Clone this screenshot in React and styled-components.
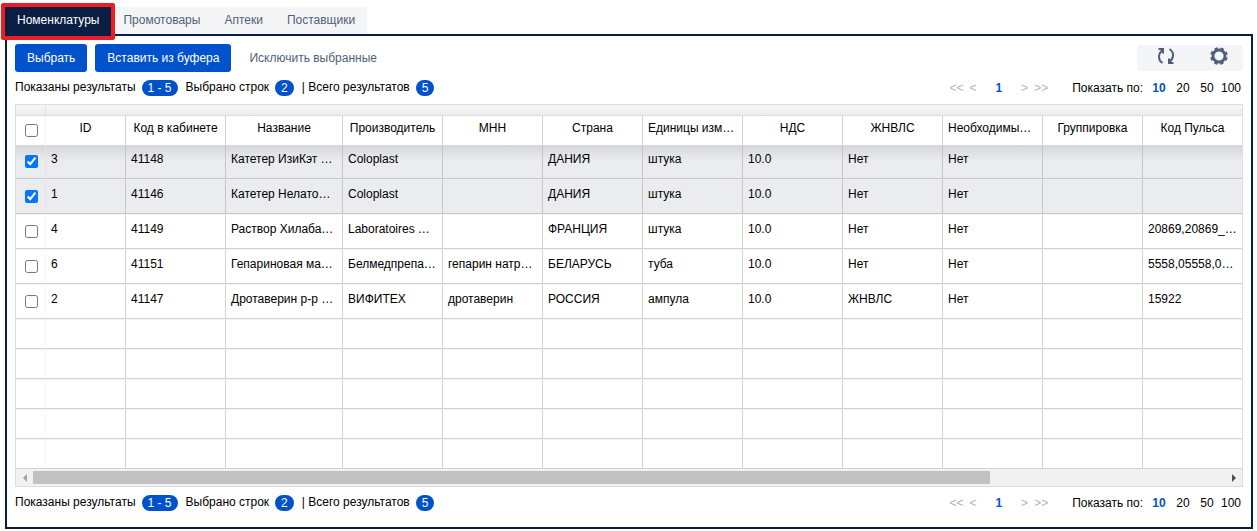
import React from 'react';
import styled, { createGlobalStyle } from 'styled-components';

const GlobalStyle = createGlobalStyle`
  *, *::before, *::after { box-sizing: border-box; }
  body {
    margin: 0;
    background: #fff;
    color: #000;
    font-family: Arial, "Liberation Sans", sans-serif;
    font-size: 12px;
    line-height: 16px;
  }
  button, input { font: inherit; }
`;

const Page = styled.main`
  padding: 7px 4px 2px 5px;
`;

const TabBar = styled.nav`
  display: flex;
  width: fit-content;
  height: 27px;
  background: #f4f5f7;
`;

const Tab = styled.button`
  position: relative;
  padding: 0 12px 2px;
  border: 0;
  background: ${(p) => (p.$active ? '#091e42' : 'transparent')};
  color: ${(p) => (p.$active ? '#fff' : '#505f79')};
  cursor: pointer;
`;

const Highlight = styled.span`
  position: absolute;
  inset: -4px -4px -6px;
  border: 4px solid #ee1c25;
  border-radius: 2px;
  pointer-events: none;
`;

const Panel = styled.section`
  padding: 8px;
  border: 2px solid #091e42;
`;

const Toolbar = styled.div`
  display: flex;
  align-items: center;
  gap: 8px;
`;

const Button = styled.button`
  height: 28px;
  padding: ${(p) => (p.$plain ? '0 10px' : '0 12px')};
  border: 0;
  border-radius: 3px;
  background: ${(p) => (p.$plain ? 'transparent' : '#0052cc')};
  color: ${(p) => (p.$plain ? '#505f79' : '#fff')};
  cursor: pointer;
`;

const IconBar = styled.div`
  display: flex;
  margin-left: auto;
  border-radius: 3px;
  background: #f4f5f7;
`;

const IconButton = styled.button`
  display: grid;
  place-items: center;
  width: 53px;
  height: 26px;
  padding: 0 0 4px 5px;
  border: 0;
  background: transparent;
  color: #505f79;
  cursor: pointer;
`;

const StatusRow = styled.div`
  display: flex;
  justify-content: space-between;
  align-items: center;
  height: 32px;
`;

const Summary = styled.div`
  display: flex;
  align-items: center;
  gap: 6px;
  padding-bottom: 2px;
`;

const Badge = styled.span`
  margin: 2px 2px 0 0;
  padding: 0 6px;
  border-radius: 8px;
  background: #0052cc;
  color: #fff;
`;

const Pager = styled.div`
  display: flex;
  align-items: center;
`;

const PageLink = styled.button`
  padding: 0 3px;
  border: 0;
  background: transparent;
  color: ${(p) => (p.$current ? '#0052cc' : '#b3b3b3')};
  font-weight: ${(p) => (p.$current ? 'bold' : 'normal')};
  margin: ${(p) => (p.$current ? '0 13px' : '0')};
`;

const Sizes = styled.div`
  display: flex;
  margin-left: 21px;
`;

const SizeLabel = styled.span`
  margin-right: 4px;
`;

const SizeButton = styled.button`
  width: 24px;
  padding: 0;
  border: 0;
  background: transparent;
  text-align: center;
  color: ${(p) => (p.$current ? '#0052cc' : '#000')};
  font-weight: ${(p) => (p.$current ? 'bold' : 'normal')};
`;

const Grid = styled.div`
  overflow: hidden;
  border: 1px solid #ddd;
`;

const Band = styled.div`
  height: 11px;
  border-bottom: 1px solid #ddd;
  background: linear-gradient(#f7f7f7, #ececec);
  &::before {
    content: '';
    display: block;
    width: 30px;
    height: 10px;
    border-right: 1px solid #e2e2e2;
  }
`;

const Table = styled.table`
  width: 100%;
  min-width: 1226px;
  table-layout: fixed;
  border-collapse: separate;
  border-spacing: 0;
`;

const Col = styled.col`
  width: ${(p) => (p.$w ? p.$w + 'px' : 'auto')};
`;

const HeadCell = styled.th`
  height: 29px;
  padding: 4px 5px 0;
  border-right: 1px solid #d3d3d3;
  font-weight: normal;
  vertical-align: top;
  overflow: hidden;
  white-space: nowrap;
  text-overflow: ellipsis;
  &:first-child { border-color: #f5f5f5; }
  &:last-child { border-right: 0; }
`;

const Row = styled.tr`
  height: ${(p) => (p.$empty ? 30 : 35)}px;
  background: ${(p) => (p.$selected ? '#ebecf0' : '#fff')};
  --line: ${(p) => (p.$selected ? '#c6c6c8' : '#d3d3d3')};
  --faint: ${(p) => (p.$selected ? '#e4e5e9' : '#f5f5f5')};
`;

const Body = styled.tbody`
  ${Row}:first-child { height: 34px; }
  ${Row}:first-child td {
    border-top: 0;
    background: linear-gradient(#d5d6da, #ebecf0 16px);
  }
`;

const Cell = styled.td`
  padding: 6px 5px 0;
  border-top: 1px solid #f2f2f2;
  border-right: 1px solid var(--line);
  border-bottom: 1px solid var(--line);
  vertical-align: top;
  overflow: hidden;
  white-space: nowrap;
  text-overflow: ellipsis;
  &:first-child { border-right-color: var(--faint); }
  &:last-child { border-right: 0; }
`;

const Check = styled.input`
  display: block;
  width: 13px;
  height: 13px;
  margin: 4px 0 0 4px;
`;

const ScrollBar = styled.div`
  display: flex;
  align-items: center;
  height: 17px;
  background: #f1f1f1;
`;

const ScrollArrow = styled.button`
  display: grid;
  place-items: center;
  width: 17px;
  height: 17px;
  padding: 0;
  border: 0;
  background: transparent;
  color: ${(p) => (p.$off ? '#a3a3a3' : '#505050')};
`;

const Track = styled.div`
  flex: 1;
`;

const Thumb = styled.div`
  width: 80.3%;
  height: 13px;
  background: #c1c1c1;
`;

const WIDTHS = [30, 80, 100, 117, 100, 100, 100, 100, 100, 100, 100, 100, 0];
const HEADERS = ['ID', 'Код в кабинете', 'Название', 'Производитель', 'МНН', 'Страна', 'Единицы измерения', 'НДС', 'ЖНВЛС', 'Необходимый запас', 'Группировка', 'Код Пульса'];
const ROWS = [
  { on: true, cells: ['3', '41148', 'Катетер ИзиКэт женский', 'Coloplast', '', 'ДАНИЯ', 'штука', '10.0', 'Нет', 'Нет', '', ''] },
  { on: true, cells: ['1', '41146', 'Катетер Нелатона мужской', 'Coloplast', '', 'ДАНИЯ', 'штука', '10.0', 'Нет', 'Нет', '', ''] },
  { on: false, cells: ['4', '41149', 'Раствор Хилабак для глаз', 'Laboratoires Thea', '', 'ФРАНЦИЯ', 'штука', '10.0', 'Нет', 'Нет', '', '20869,20869_1,20870'] },
  { on: false, cells: ['6', '41151', 'Гепариновая мазь 25 г', 'Белмедпрепараты', 'гепарин натрия, бензокаин', 'БЕЛАРУСЬ', 'туба', '10.0', 'Нет', 'Нет', '', '5558,05558,05559'] },
  { on: false, cells: ['2', '41147', 'Дротаверин р-р для инъекций', 'ВИФИТЕХ', 'дротаверин', 'РОССИЯ', 'ампула', '10.0', 'ЖНВЛС', 'Нет', '', '15922'] },
];

const Status = () => (
  <StatusRow>
    <Summary>
      Показаны результаты <Badge>1 - 5</Badge>
      Выбрано строк <Badge>2</Badge>
      | Всего результатов <Badge>5</Badge>
    </Summary>
    <Pager>
      <PageLink>&lt;&lt;</PageLink>
      <PageLink>&lt;</PageLink>
      <PageLink $current>1</PageLink>
      <PageLink>&gt;</PageLink>
      <PageLink>&gt;&gt;</PageLink>
      <Sizes>
        <SizeLabel>Показать по:</SizeLabel>
        {[10, 20, 50, 100].map((n) => (
          <SizeButton key={n} $current={n === 10}>{n}</SizeButton>
        ))}
      </Sizes>
    </Pager>
  </StatusRow>
);

const RefreshIcon = () => (
  <svg width="18" height="18" viewBox="0 0 18 18" fill="none" stroke="currentColor" strokeWidth="2" aria-hidden="true">
    <path d="M5.500 16C0.800 13 0.800 7 5.500 3M1.500 2H6V6.500M12.500 2C17.200 5 17.200 11 12.500 15M16.500 16H12V11.500" />
  </svg>
);

const GearIcon = () => (
  <svg width="18" height="18" viewBox="0 0 18 18" fill="none" stroke="currentColor" aria-hidden="true">
    <circle cx="9" cy="9" r="6" strokeWidth="2.800" />
    <circle cx="9" cy="9" r="7.800" strokeWidth="2" strokeDasharray="3.400 2.726" strokeDashoffset="-1.360" />
  </svg>
);

export default function App() {
  return (
    <Page>
      <GlobalStyle />
      <TabBar>
        <Tab $active>Номенклатуры<Highlight /></Tab>
        <Tab>Промотовары</Tab>
        <Tab>Аптеки</Tab>
        <Tab>Поставщики</Tab>
      </TabBar>
      <Panel>
        <Toolbar>
          <Button>Выбрать</Button>
          <Button>Вставить из буфера</Button>
          <Button $plain>Исключить выбранные</Button>
          <IconBar>
            <IconButton aria-label="Обновить"><RefreshIcon /></IconButton>
            <IconButton aria-label="Настройки"><GearIcon /></IconButton>
          </IconBar>
        </Toolbar>
        <Status />
        <Grid>
          <Band />
          <Table>
            <colgroup>{WIDTHS.map((w, i) => <Col key={i} $w={w} />)}</colgroup>
            <thead>
              <tr>
                <HeadCell><Check type="checkbox" aria-label="Выбрать все" /></HeadCell>
                {HEADERS.map((h) => <HeadCell key={h}>{h}</HeadCell>)}
              </tr>
            </thead>
            <Body>
              {ROWS.map((row) => (
                <Row key={row.cells[0]} $selected={row.on}>
                  <Cell><Check type="checkbox" defaultChecked={row.on} aria-label={row.cells[2]} /></Cell>
                  {row.cells.map((text, i) => <Cell key={i}>{text}</Cell>)}
                </Row>
              ))}
              {[0, 1, 2, 3, 4].map((r) => (
                <Row key={'empty' + r} $empty>
                  {WIDTHS.map((_, i) => <Cell key={i} />)}
                </Row>
              ))}
            </Body>
          </Table>
          <ScrollBar>
            <ScrollArrow $off aria-label="Влево">
              <svg width="4" height="8" viewBox="0 0 4 8" fill="currentColor"><path d="M4 0V8L0 4Z" /></svg>
            </ScrollArrow>
            <Track><Thumb /></Track>
            <ScrollArrow aria-label="Вправо">
              <svg width="4" height="8" viewBox="0 0 4 8" fill="currentColor"><path d="M0 0V8L4 4Z" /></svg>
            </ScrollArrow>
          </ScrollBar>
        </Grid>
        <Status />
      </Panel>
    </Page>
  );
}
